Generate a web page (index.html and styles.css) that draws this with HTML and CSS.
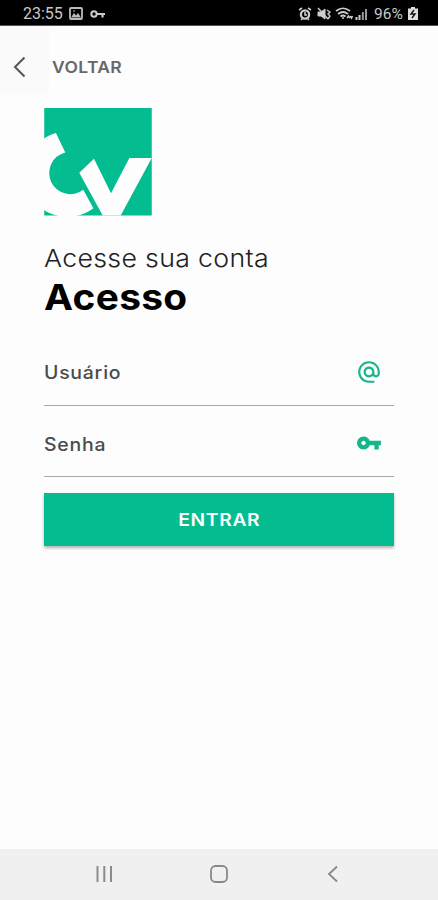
FILE: index.html
```html
<!DOCTYPE html>
<html lang="pt-BR">
<head>
<meta charset="utf-8">
<meta name="viewport" content="width=device-width">
<title>Acesso</title>
<link rel="stylesheet" href="styles.css">
</head>
<body>
<div class="screen">
  <header class="status">
    <span class="status-text clock">23:55</span>
    <svg class="picture" width="14" height="13" viewBox="0 0 14 13"><rect x="1" y="1" width="12" height="11" rx="1" fill="none" stroke="#bbb" stroke-width="1.8"/><path d="M2 10.500l3-4.500 2 2.500 2-2.500 3 4.500z" fill="#bbb"/><path d="M4 4h2" stroke="#bbb"/></svg>
    <svg class="vpn" width="15" height="10" viewBox="0 0 15 10"><circle cx="4" cy="5" r="2.7" fill="none" stroke="#ccc" stroke-width="2"/><path d="M7 5h8M12.5 5v3.5" stroke="#ccc" stroke-width="2.2"/></svg>
    <span class="spacer"></span>
    <svg class="indicators" width="72" height="16" viewBox="0 0 72 16" fill="none" stroke="#ccc">
      <circle cx="7" cy="8.5" r="4.1" stroke-width="2.3"/><path d="M1 4l3-2M13 4l-3-2M3 14l2-2M11 14l-2-2M7 6v3h2" stroke-width="1.6"/>
      <path d="M20 6h3l4-3v10l-4-3h-3z" fill="#ccc"/><path d="M20 2l10 11M29 4l3 2-2 2 2 2-2 3" stroke-width="1.4"/>
      <path d="M38 5q7-5.500 14 0M40 8q5-4 10 0M42.500 10.500q2.500-2 5 0" stroke-width="1.7"/><path d="M45 11v2M49 12l1.500-2 1.500 2M52.500 10l1 2 1-2" stroke-width="1.5"/>
      <path d="M58.500 14v-3M61.500 14V9" stroke-width="2"/><path d="M64.800 14V6M68 14V3" stroke="#999" stroke-width="2"/>
    </svg>
    <span class="status-text battery-text">96%</span>
    <svg class="battery" width="10" height="13" viewBox="0 0 10 13"><path d="M3 0h4v1.500h3V13H0V1.500h3z" fill="#ddd"/><path d="M6 3L3 7h4l-3 4" fill="none" stroke="#111" stroke-width="1.4"/></svg>
  </header>
  <nav class="topbar">
    <div class="back"><svg width="16" height="24" viewBox="0 0 16 24"><path d="M14.500 2.500L5 12l9.500 9.500" fill="none" stroke="#555" stroke-width="2"/></svg></div>
    <span class="back-label">VOLTAR</span>
  </nav>
  <main class="content">
    <svg class="logo" viewBox="31 30 322 322">
      <rect x="31" y="30" width="322" height="322" fill="#03bc90"/>
      <path d="M66 105A128 128 0 1 0 178 330L148 275A63.500 63.500 0 1 1 94 163Z" fill="#fdfdfd"/>
      <path d="M136 224L180 182 231 285 286 180H353L260 352H206Z" fill="#fdfdfd"/>
    </svg>
    <p class="subtitle"><span>Acesse sua conta</span></p>
    <h1 class="title"><span>Acesso</span></h1>
    <div class="field">
      <span class="label">Usuário</span>
      <svg width="26" height="26" viewBox="0 0 24 24" fill="#16b58a"><path d="M12 2C6.480 2 2 6.480 2 12s4.480 10 10 10h5v-2h-5c-4.340 0-8-3.660-8-8s3.660-8 8-8 8 3.660 8 8v1.430c0 .79-.71 1.570-1.500 1.570s-1.500-.78-1.500-1.570V12c0-2.760-2.240-5-5-5s-5 2.240-5 5 2.240 5 5 5c1.380 0 2.640-.56 3.540-1.470.65.890 1.770 1.470 2.960 1.470 1.970 0 3.500-1.600 3.500-3.570V12c0-5.520-4.480-10-10-10zm0 13c-1.660 0-3-1.340-3-3s1.340-3 3-3 3 1.340 3 3-1.340 3-3 3z"/></svg>
    </div>
    <div class="field password">
      <span class="label">Senha</span>
      <svg width="26" height="26" viewBox="0 0 24 24" fill="#16b58a"><path d="M12.650 10C11.830 7.670 9.610 6 7 6c-3.310 0-6 2.690-6 6s2.690 6 6 6c2.610 0 4.830-1.670 5.650-4H17v4h4v-4h2v-4H12.650zM7 14c-1.100 0-2-.9-2-2s.9-2 2-2 2 .9 2 2-.9 2-2 2z"/></svg>
    </div>
    <button class="enter" type="button"><span>ENTRAR</span></button>
  </main>
  <footer class="navbar">
    <svg width="20" height="20" viewBox="0 0 20 20"><path d="M2.500 2v16M9.300 2v16M16 2v16" stroke="#8b8b8b" stroke-width="2"/></svg>
    <svg width="20" height="20" viewBox="0 0 20 20"><rect x="2" y="2" width="16" height="16" rx="4.500" fill="none" stroke="#888" stroke-width="1.800"/></svg>
    <svg width="20" height="20" viewBox="0 0 20 20"><path d="M14 2.500L6 10l8 7.500" fill="none" stroke="#888" stroke-width="1.800"/></svg>
  </footer>
</div>
</body>
</html>
```
FILE: styles.css
```css
* { box-sizing: border-box; }
body { margin: 0; background: #fdfdfd; font-family: Inter, "Liberation Sans", sans-serif; }
svg { display: block; flex: none; }
.screen { width: 438px; height: 900px; display: flex; flex-direction: column; overflow: hidden; }
.status { height: 26px; background: #000; border-bottom: 1px solid #555; display: flex; align-items: center; padding: 2px 20px 0 23px; flex: none; }
.status-text { font: 16px/22px Roboto, sans-serif; color: #c8c8c8; white-space: nowrap; }
.clock { width: 46px; }
.picture { margin-right: 7px; }
.spacer { flex: 1; }
.indicators { margin-right: 4px; }
.battery-text { width: 34px; font-size: 15.500px; }
.topbar { height: 67px; display: flex; align-items: center; flex: none; }
.back { width: 49px; height: 67px; background: #fafafa; padding: 29px 0 0 10px; }
.back-label { margin: 15px 0 0 3px; font-size: 16.500px; font-weight: 600; line-height: 24px; letter-spacing: .35px; color: #686868; transform: scaleX(1.06); transform-origin: left; }
.content { flex: 1; padding: 15px 44px 0; }
.logo { width: 108px; height: 107.500px; }
.subtitle, .title { margin: 0; color: #000; white-space: nowrap; }
.subtitle { margin-top: 26.500px; font-size: 24.500px; font-weight: 300; line-height: 32px; letter-spacing: .300px; color: #222; }
.title { font-size: 36px; font-weight: 700; line-height: 46px; letter-spacing: .3px; }
.title span { display: inline-block; transform: scaleX(1.08); transform-origin: left; }
.subtitle span { display: inline-block; transform: scaleX(1.09); transform-origin: left; }
.field { height: 70.500px; display: flex; align-items: center; justify-content: space-between; border-bottom: 1px solid #a9a9a9; padding: 4px 12px 0 0; }
.title + .field { margin-top: 15px; }
.password { height: 71px; padding-top: 5px; }
.label { margin-top: 2px; font-size: 18px; font-weight: 500; letter-spacing: .7px; color: #4b4b4b; transform: scaleX(1.08); transform-origin: left; }
.enter { display: block; width: 350px; height: 53px; margin-top: 16px; padding: 2px 0 0; border: 0; background: #03bc90; box-shadow: 0 2px 3px rgba(0, 0, 0, .3); color: #fff; font: 600 17.500px/24px Inter, sans-serif; letter-spacing: .6px; }
.enter span { display: inline-block; transform: scaleX(1.1); }
.navbar { height: 51px; flex: none; background: #f0f0f0; display: flex; align-items: center; justify-content: space-between; padding: 0 95px 2px; }
```
